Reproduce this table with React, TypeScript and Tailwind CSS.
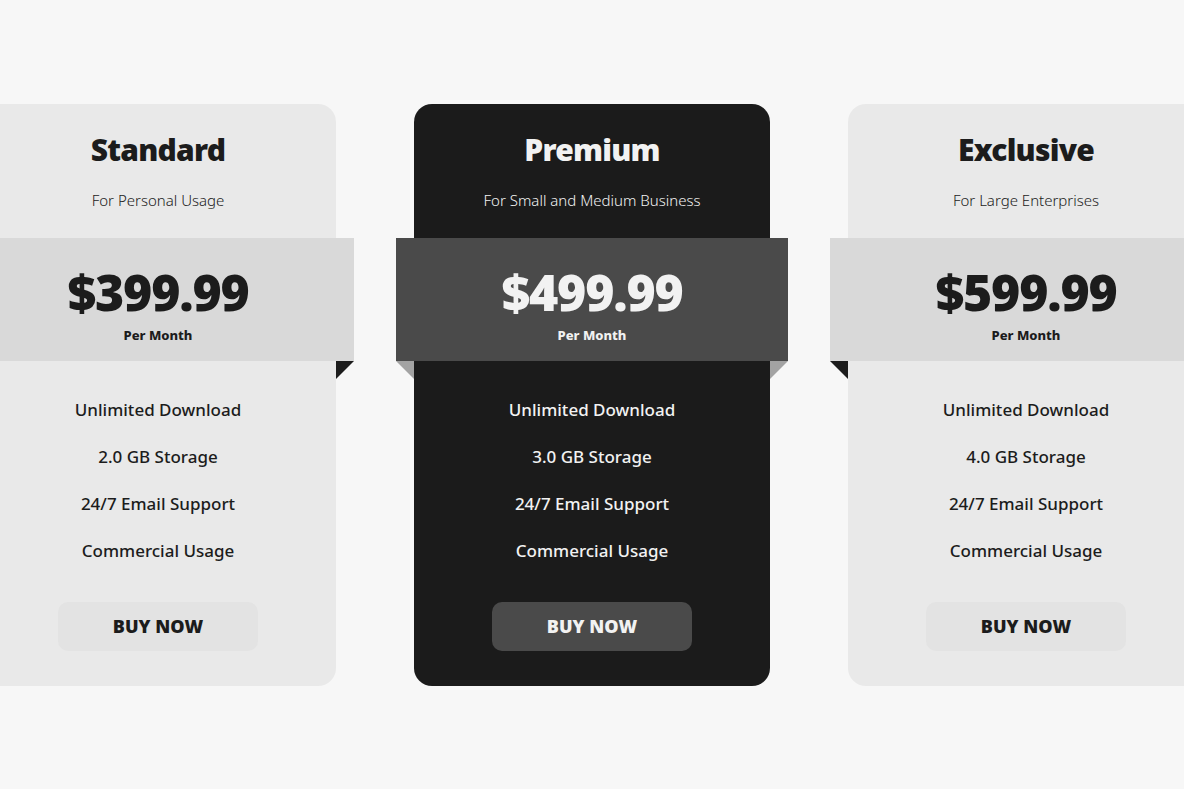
import React from 'react';

interface Plan {
    name: string;
    tagline: string;
    price: string;
    storage: string;
    dark?: boolean;
}

const PLANS: Plan[] = [
    { name: 'Standard', tagline: 'For Personal Usage', price: '$399.99', storage: '2.0 GB Storage' },
    { name: 'Premium', tagline: 'For Small and Medium Business', price: '$499.99', storage: '3.0 GB Storage', dark: true },
    { name: 'Exclusive', tagline: 'For Large Enterprises', price: '$599.99', storage: '4.0 GB Storage' },
];

function PlanCard({ plan }: { plan: Plan }) {
    const dark = !!plan.dark;
    const fold = dark ? 'border-t-[#a3a3a3]' : 'border-t-[#1c1c1c]';

    return (
        <div
            className={`flex w-[356px] shrink-0 flex-col items-center rounded-[18px] pt-[28px] pb-[35px] ${
                dark ? 'bg-[#1b1b1b] text-[#f2f2f2]' : 'bg-[#e9e9e9] text-[#1c1c1c]'
            }`}
        >
            <h2 className="text-[30px] leading-[36px] font-black tracking-tight">{plan.name}</h2>
            <p className="mt-[22px] text-[15px] leading-[20px] font-light">{plan.tagline}</p>

            {/* price ribbon, wider than the card */}
            <div
                className={`relative mt-[28px] flex w-[392px] flex-col items-center pt-[29px] pb-[17px] ${
                    dark ? 'bg-[#4a4a4a]' : 'bg-[#d9d9d9]'
                }`}
            >
                <div className="text-[50px] leading-[50px] font-black tracking-tight">{plan.price}</div>
                <div className="mt-[9px] text-[13px] leading-[18px] font-extrabold">Per Month</div>
                <span
                    className={`absolute top-full left-0 h-0 w-0 border-t-[18px] border-l-[18px] border-l-transparent ${fold}`}
                />
                <span
                    className={`absolute top-full right-0 h-0 w-0 border-t-[18px] border-r-[18px] border-r-transparent ${fold}`}
                />
            </div>

            <ul className="mt-[37px] flex flex-col items-center gap-[23px] text-[17px] leading-[24px] font-medium">
                <li>Unlimited Download</li>
                <li>{plan.storage}</li>
                <li>24/7 Email Support</li>
                <li>Commercial Usage</li>
            </ul>

            <button
                className={`mt-[39px] h-[49px] w-[200px] rounded-[10px] text-[18px] font-black ${
                    dark ? 'bg-[#4a4a4a]' : 'bg-[#e3e3e3]'
                }`}
            >
                BUY NOW
            </button>
        </div>
    );
}

export default function App() {
    return (
        <div className="flex h-[789px] w-full items-center justify-center gap-[78px] overflow-hidden bg-[#f7f7f7] font-['Noto_Sans','Open_Sans',sans-serif]">
            {PLANS.map((plan) => (
                <PlanCard key={plan.name} plan={plan} />
            ))}
        </div>
    );
}
